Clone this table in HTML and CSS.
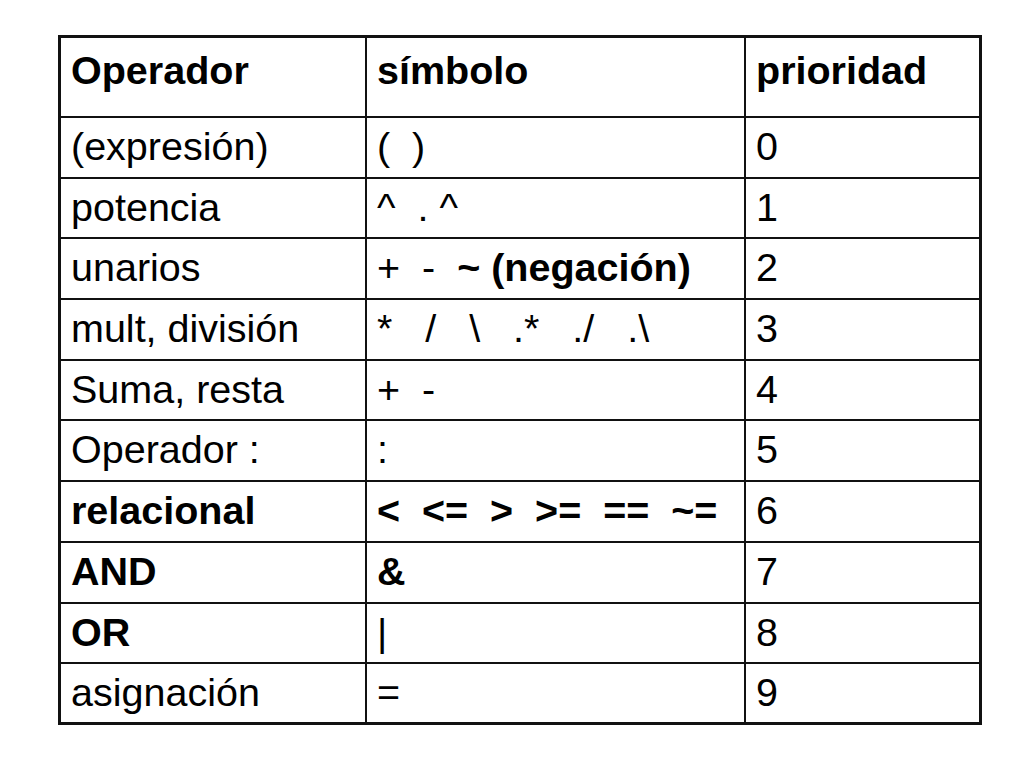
FILE: index.html
```html
<!DOCTYPE html>
<html lang="es">
<head>
<meta charset="utf-8">
<title>Operadores</title>
<link rel="stylesheet" href="styles.css">
</head>
<body>
<div class="page">
  <div class="table" role="table">
    <div class="cell head" role="columnheader">Operador</div>
    <div class="cell head" role="columnheader">símbolo</div>
    <div class="cell head last-col" role="columnheader">prioridad</div>

    <div class="cell">(expresión)</div>
    <div class="cell">(  )</div>
    <div class="cell last-col">0</div>

    <div class="cell">potencia</div>
    <div class="cell">^  . ^</div>
    <div class="cell last-col">1</div>

    <div class="cell">unarios</div>
    <div class="cell">+  -  <b>~ (negación)</b></div>
    <div class="cell last-col">2</div>

    <div class="cell">mult, división</div>
    <div class="cell">*   /   \   .*   ./   .\</div>
    <div class="cell last-col">3</div>

    <div class="cell">Suma, resta</div>
    <div class="cell">+  -</div>
    <div class="cell last-col">4</div>

    <div class="cell">Operador :</div>
    <div class="cell">:</div>
    <div class="cell last-col">5</div>

    <div class="cell bold">relacional</div>
    <div class="cell bold">&lt;  &lt;=  &gt;  &gt;=  ==  ~=</div>
    <div class="cell last-col">6</div>

    <div class="cell bold">AND</div>
    <div class="cell bold">&amp;</div>
    <div class="cell last-col">7</div>

    <div class="cell bold">OR</div>
    <div class="cell">|</div>
    <div class="cell last-col">8</div>

    <div class="cell last-row">asignación</div>
    <div class="cell last-row">=</div>
    <div class="cell last-col last-row">9</div>
  </div>
</div>
</body>
</html>
```

FILE: styles.css
```css
html, body {
  margin: 0;
  padding: 0;
  background: #ffffff;
}

.page {
  padding: 35px 0 0 58px;
}

.table {
  box-sizing: border-box;
  width: 924px;
  height: 690px;
  border: 3px solid #111;
  display: grid;
  grid-template-columns: 306px 379px 233px;
  grid-template-rows: 80px repeat(9, 60.7px) 1fr;
  font-family: "Liberation Sans", Arial, sans-serif;
  font-size: 39.5px;
  line-height: 45px;
  color: #000;
}

.cell {
  box-sizing: border-box;
  border-right: 2px solid #111;
  border-bottom: 2px solid #111;
  padding: 6px 0 0 10px;
  white-space: pre;
  overflow: hidden;
}

.cell.head {
  font-weight: bold;
  padding-top: 10px;
}

.cell.bold,
.cell b {
  font-weight: bold;
}

.cell.last-col {
  border-right: none;
}

.cell.last-row {
  border-bottom: none;
}
```
